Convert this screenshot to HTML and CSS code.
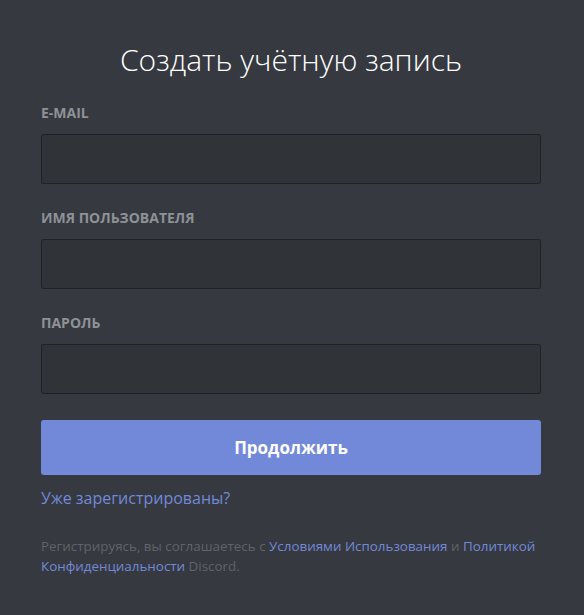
FILE: index.html
```html
<!DOCTYPE html>
<html lang="ru">
<head>
<meta charset="utf-8">
<title>Создать учётную запись</title>
<link rel="stylesheet" href="styles.css">
</head>
<body>
<main class="auth">
  <h1 class="title">Создать учётную запись</h1>
  <form class="form">
    <div class="field">
      <label class="label" for="email">E-MAIL</label>
      <input class="input" id="email" type="email">
    </div>
    <div class="field">
      <label class="label" for="user">ИМЯ ПОЛЬЗОВАТЕЛЯ</label>
      <input class="input" id="user" type="text">
    </div>
    <div class="field">
      <label class="label" for="pass">ПАРОЛЬ</label>
      <input class="input" id="pass" type="password">
    </div>
    <button class="btn" type="button">Продолжить</button>
    <a class="link login" href="#">Уже зарегистрированы?</a>
    <p class="terms">Регистрируясь, вы соглашаетесь с <a class="link" href="#">Условиями Использования</a> и <a class="link" href="#">Политикой Конфиденциальности</a> Discord.</p>
  </form>
</main>
</body>
</html>
```

FILE: styles.css
```css
html, body {
  margin: 0;
  padding: 0;
  background: #36393f;
}
body {
  font-family: "Open Sans", "Noto Sans", sans-serif;
  color: #fff;
}
.auth {
  padding: 40px 43px 0 41px;
}
.title {
  margin: 0 0 25px;
  text-align: center;
  font-size: 30px;
  font-weight: 300;
  line-height: 40px;
  color: #fff;
}
.form {
  display: flex;
  flex-direction: column;
}
.field {
  display: flex;
  flex-direction: column;
  margin-bottom: 26px;
}
.label {
  font-size: 14px;
  font-weight: 700;
  line-height: 16px;
  color: #8e9297;
  margin-bottom: 13px;
}
.input {
  box-sizing: border-box;
  height: 50px;
  width: 100%;
  background: rgba(0,0,0,0.1);
  border: 1px solid rgba(0,0,0,0.35);
  border-radius: 3px;
  outline: none;
  margin: 0;
}
.btn {
  height: 55px;
  border: 0;
  border-radius: 3px;
  background: #7289da;
  color: #fff;
  font-family: inherit;
  font-size: 17px;
  font-weight: 700;
  margin-bottom: 13px;
}
.link {
  color: #7289da;
  text-decoration: none;
}
.login {
  font-size: 16px;
  line-height: 20px;
  align-self: flex-start;
}
.terms {
  margin: 28px 0 0;
  font-size: 13.4px;
  line-height: 20px;
  color: #5f636a;
}
```
